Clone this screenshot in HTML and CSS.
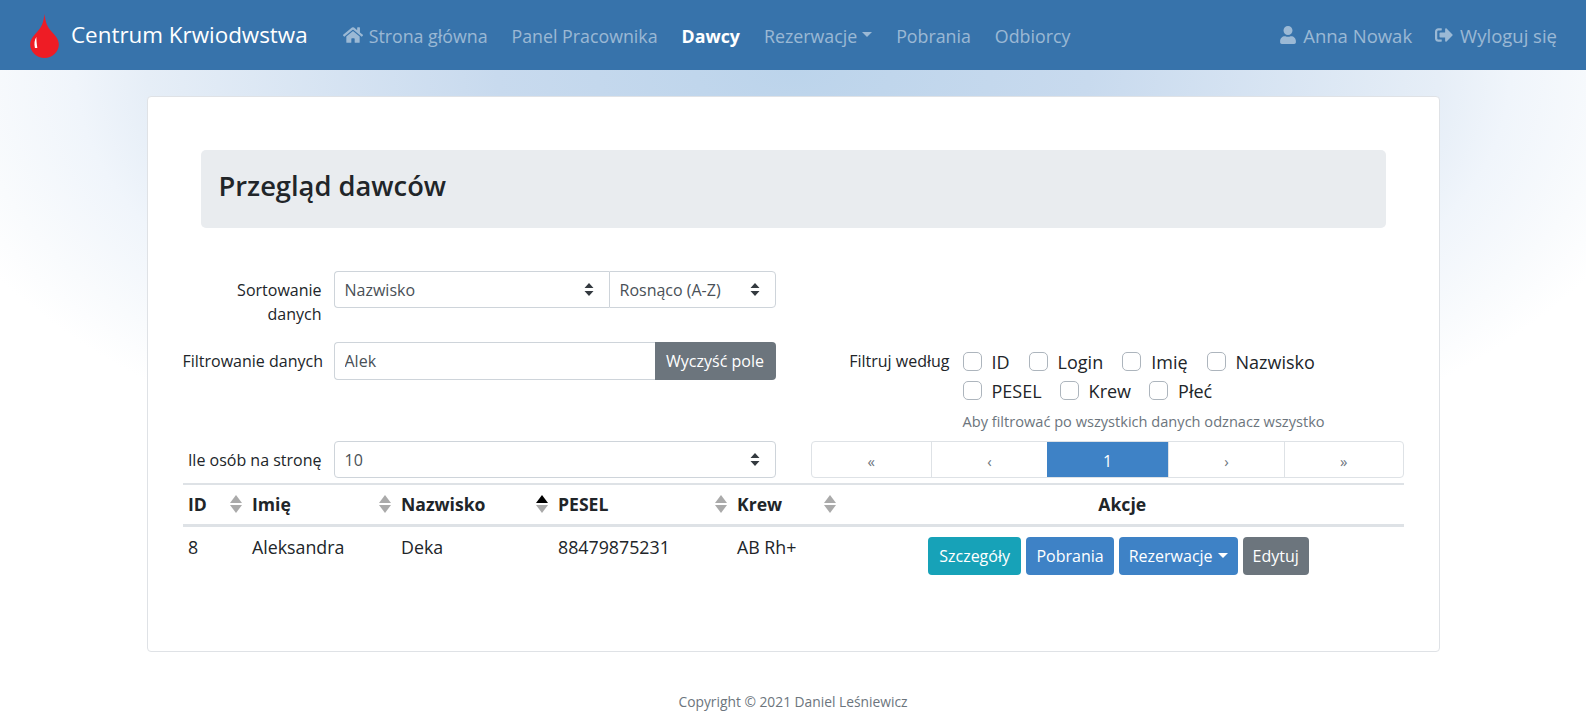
FILE: index.html
```html
<!DOCTYPE html>
<html lang="pl">
<head>
<meta charset="utf-8">
<title>Centrum Krwiodwstwa</title>
<link rel="stylesheet" href="styles.css">
</head>
<body>
<nav class="navbar">
  <a class="brand" href="#">
    <svg class="drop" viewBox="0 0 30 46" width="30" height="46"><path d="M15 0C16 9 18 14 23 19C28 24 30 28 30 32C30 40 23 46 15 46C7 46 0 40 0 32C0 28 2 24 7 19C12 14 14 9 15 0Z" fill="#ee1c25"/><path d="M6.500 24C4.500 27 4 31 5 35.500L7.500 35.500C6.800 31 6.500 27 6.500 24Z" fill="#fff"/></svg>
    <span>Centrum Krwiodwstwa</span>
  </a>
  <ul class="nav-list">
    <li><a href="#"><svg class="icon home" viewBox="0 0 576 512"><path d="M280.37 148.26L96 300.11V464a16 16 0 0 0 16 16l112.06-.29a16 16 0 0 0 15.92-16V368a16 16 0 0 1 16-16h64a16 16 0 0 1 16 16v95.64a16 16 0 0 0 16 16.05L464 480a16 16 0 0 0 16-16V300L295.67 148.26a12.19 12.19 0 0 0-15.3 0zM571.6 251.47L488 182.56V44.05a12 12 0 0 0-12-12h-56a12 12 0 0 0-12 12v72.61L318.47 43a48 48 0 0 0-61 0L4.34 251.47a12 12 0 0 0-1.6 16.9l25.5 31A12 12 0 0 0 45.15 301l235.22-193.74a12.19 12.19 0 0 1 15.3 0L530.9 301a12 12 0 0 0 16.9-1.6l25.5-31a12 12 0 0 0-1.7-16.93z"/></svg>Strona główna</a></li>
    <li><a href="#">Panel Pracownika</a></li>
    <li><a class="active" href="#">Dawcy</a></li>
    <li><a class="caret-link" href="#">Rezerwacje</a></li>
    <li><a href="#">Pobrania</a></li>
    <li><a href="#">Odbiorcy</a></li>
  </ul>
  <ul class="nav-list nav-right">
    <li><a href="#"><svg class="icon user" viewBox="0 0 448 512"><path d="M224 256c70.700 0 128-57.300 128-128S294.700 0 224 0 96 57.300 96 128s57.300 128 128 128zm89.600 32h-16.700c-22.200 10.200-46.900 16-72.900 16s-50.600-5.800-72.900-16h-16.700C60.200 288 0 348.200 0 422.400V464c0 26.500 21.500 48 48 48h352c26.500 0 48-21.500 48-48v-41.600c0-74.200-60.200-134.400-134.400-134.400z"/></svg>Anna Nowak</a></li>
    <li><a href="#"><svg class="icon out" viewBox="0 0 512 512"><path d="M497 273L329 441c-15 15-41 4.500-41-17v-96H152c-13.300 0-24-10.700-24-24v-96c0-13.300 10.700-24 24-24h136V88c0-21.400 25.900-32 41-17l168 168c9.300 9.400 9.300 24.600 0 34zM192 436v-40c0-6.600-5.400-12-12-12H96c-17.700 0-32-14.300-32-32V160c0-17.700 14.300-32 32-32h84c6.600 0 12-5.400 12-12V76c0-6.600-5.400-12-12-12H96c-53 0-96 43-96 96v192c0 53 43 96 96 96h84c6.600 0 12-5.400 12-12z"/></svg>Wyloguj się</a></li>
  </ul>
</nav>

<main class="card">
  <header class="jumbo"><h1>Przegląd dawców</h1></header>

  <section class="form-grid">
    <div class="field">
      <label class="field-label">Sortowanie<br>danych</label>
      <div class="group">
        <select class="select grow"><option>Nazwisko</option></select>
        <select class="select order"><option>Rosnąco (A-Z)</option></select>
      </div>
    </div>
    <div></div>

    <div class="field">
      <label class="field-label">Filtrowanie danych</label>
      <div class="group">
        <input class="input" type="text" value="Alek">
        <button class="btn btn-secondary btn-clear">Wyczyść pole</button>
      </div>
    </div>
    <div class="field">
      <label class="field-label">Filtruj według</label>
      <div class="filters">
        <div class="checks">
          <label class="check"><input type="checkbox">ID</label>
          <label class="check"><input type="checkbox">Login</label>
          <label class="check"><input type="checkbox">Imię</label>
          <label class="check"><input type="checkbox">Nazwisko</label>
        </div>
        <div class="checks checks-tight">
          <label class="check"><input type="checkbox">PESEL</label>
          <label class="check"><input type="checkbox">Krew</label>
          <label class="check"><input type="checkbox">Płeć</label>
        </div>
        <small class="hint">Aby filtrować po wszystkich danych odznacz wszystko</small>
      </div>
    </div>

    <div class="field">
      <label class="field-label">Ile osób na stronę</label>
      <div class="group"><select class="select grow"><option>10</option></select></div>
    </div>
    <div class="pagination">
      <a href="#">«</a><a href="#">‹</a><a class="current" href="#">1</a><a href="#">›</a><a href="#">»</a>
    </div>
  </section>

  <table class="table">
    <colgroup><col class="c1"><col class="c2"><col class="c3"><col class="c4"><col class="c5"><col></colgroup>
    <thead>
      <tr>
        <th><div class="th-in">ID<span class="sort"><i class="up"></i><i class="down"></i></span></div></th>
        <th><div class="th-in">Imię<span class="sort"><i class="up"></i><i class="down"></i></span></div></th>
        <th><div class="th-in">Nazwisko<span class="sort"><i class="up on"></i><i class="down"></i></span></div></th>
        <th><div class="th-in">PESEL<span class="sort"><i class="up"></i><i class="down"></i></span></div></th>
        <th><div class="th-in">Krew<span class="sort"><i class="up"></i><i class="down"></i></span></div></th>
        <th class="center">Akcje</th>
      </tr>
    </thead>
    <tbody>
      <tr>
        <td>8</td><td>Aleksandra</td><td>Deka</td><td>88479875231</td><td>AB Rh+</td>
        <td class="center">
          <div class="actions">
            <button class="btn btn-info">Szczegóły</button>
            <button class="btn btn-primary">Pobrania</button>
            <button class="btn btn-primary caret-link">Rezerwacje</button>
            <button class="btn btn-secondary">Edytuj</button>
          </div>
        </td>
      </tr>
    </tbody>
  </table>
</main>

<footer class="footer">Copyright © 2021 Daniel Leśniewicz</footer>
</body>
</html>
```
FILE: styles.css
```css
* { box-sizing: border-box; }
html, body { height: 100%; }
body {
  margin: 0;
  font-family: "Open Sans", "Noto Sans", sans-serif;
  font-size: 16px;
  line-height: 24px;
  color: #212529;
  background: #fff radial-gradient(ellipse 897px 449px at 50% 70px, #bcd4eb 0%, #c8daee 33%, #e6eef7 72%, #f0f5fb 80%, #f9fbfd 92%, #fff 100%) no-repeat;
}
a { text-decoration: none; }

.navbar {
  height: 70px;
  background: #3773ab;
  display: flex;
  align-items: center;
  padding: 0 29px 0 30px;
}
.brand { display: flex; align-items: center; color: #fff; font-size: 22.4px; margin-right: 35px; }
.drop { margin-right: 12px; width: 29px; height: 44px; margin-top: 1px; }
.nav-list { display: flex; list-style: none; margin: 1px 0 0; padding: 0; gap: 24px; align-items: center; font-size: 17.8px; }
.nav-right { margin-left: auto; gap: 22px; font-size: 18.5px; }
.nav-list a { color: rgba(255,255,255,.5); display: flex; align-items: center; }
.nav-list a.active { color: #fff; font-weight: 700; }
.caret-link::after {
  content: "";
  display: inline-block;
  margin-left: 5px;
  vertical-align: .2em;
  border-top: 5px solid currentColor;
  border-left: 5px solid transparent;
  border-right: 5px solid transparent;
}
.nav-list .caret-link::after { margin-bottom: 3px; }
.icon { fill: currentColor; height: 18px; margin-right: 6px; margin-top: -2px; }
.home { width: 20px; }
.user { width: 18px; }
.out { width: 20px; }

.card {
  width: 1293px;
  height: 556px;
  margin: 26px auto 0;
  padding: 53px 37px 0 35px;
  background: #fff;
  border: 1px solid #dfe2e6;
  border-radius: 4px;
}
.jumbo {
  margin: 0 16px 43px 18px;
  height: 78px;
  padding: 0 18px 6px;
  display: flex;
  align-items: center;
  background: #e9ecef;
  border-radius: 5px;
}
.jumbo h1 { margin: 0; font-size: 27.3px; font-weight: 600; line-height: 32px; }

.form-grid {
  display: grid;
  grid-template-columns: 593px 593px;
  column-gap: 35px;
  row-gap: 16px;
  margin-bottom: 5px;
}
.field { display: grid; grid-template-columns: 139px 442px; column-gap: 12px; align-items: start; }
.field-label { text-align: right; padding-top: 7px; white-space: nowrap; }
.group { display: flex; }
.select, .input {
  font: inherit;
  color: #495057;
  background-color: #fff;
  border: 1px solid #ced4da;
  padding: 0 10px;
  outline: 0;
}
.input { height: 38px; }
.select {
  height: 37px;
  appearance: none;
  -webkit-appearance: none;
  border-radius: 4px;
  background-image: url("data:image/svg+xml,%3csvg xmlns='http://www.w3.org/2000/svg' width='10' height='13' viewBox='0 0 10 13'%3e%3cpath fill='%23343a40' d='M5 0l4.500 5h-9zM5 13L.5 8h9z'/%3e%3c/svg%3e");
  background-repeat: no-repeat;
  background-position: right 15px center;
}
.grow { flex: 1; min-width: 0; }
.group .grow:not(:only-child) { border-radius: 4px 0 0 4px; border-right: 0; }
.order { width: 167px; border-radius: 0 4px 4px 0; }
.input { flex: 1; min-width: 0; border-radius: 4px 0 0 4px; border-right: 0; }

.btn {
  font: inherit;
  color: #fff;
  height: 38px;
  border: 0;
  border-radius: 4px;
  padding: 0 10px;
  white-space: nowrap;
}
.btn-secondary { background: #6c757d; }
.btn-info { background: #17a2b8; padding: 0 11.5px; }
.btn-primary { background: #3e82c6; }
.btn-clear { border-radius: 0 4px 4px 0; width: 121px; padding: 0; }

.filters { display: flex; flex-direction: column; margin-left: 1px; margin-bottom: -8px; }
.checks { display: flex; gap: 19px; height: 29px; align-items: center; font-size: 18px; }
.checks-tight { gap: 18px; }
.checks:first-child { margin-top: 5px; }
.check { display: flex; align-items: center; gap: 10px; color: #212529; }
.check input {
  appearance: none;
  -webkit-appearance: none;
  margin: 0;
  width: 19px;
  height: 19px;
  background: #fff;
  border: 1px solid #adb5bd;
  border-radius: 5px;
}
.hint { font-size: 14.6px; color: #6c757d; margin-top: 4px; line-height: 24px; white-space: nowrap; }

.pagination {
  display: grid;
  grid-template-columns: 120fr 116fr 122fr 116fr 119fr;
  height: 37px;
  border: 1px solid #dee2e6;
  border-radius: 4px;
  overflow: hidden;
}
.pagination a {
  display: flex;
  align-items: center;
  justify-content: center;
  color: #6c757d;
  font-size: 15px;
  padding-top: 2px;
  border-left: 1px solid #dee2e6;
}
.pagination a:first-child { border-left: 0; }
.pagination a.current { background: #3e82c6; color: #fff; border-left: 0; font-size: 16px; }

.table { width: 1221px; table-layout: fixed; border-collapse: collapse; font-size: 17.8px; }
.c1 { width: 64px; }
.c2 { width: 149px; }
.c3 { width: 157px; }
.c4 { width: 179px; }
.c5 { width: 109px; }
.table th {
  height: 41px;
  padding: 0 5px 0 5.5px;
  text-align: left;
  font-size: 17.6px;
  font-weight: 700;
  border-top: 2px solid #dee2e6;
  border-bottom: 3px solid #dee2e6;
}
.table th.center, .table td.center { text-align: center; }
.th-in { display: flex; justify-content: space-between; align-items: center; }
.sort { display: flex; flex-direction: column; gap: 2px; }
.sort i { display: block; width: 0; height: 0; border-left: 6px solid transparent; border-right: 6px solid transparent; }
.sort .up { border-bottom: 8px solid #aaa; }
.sort .up.on { border-bottom-color: #000; }
.sort .down { border-top: 8px solid #aaa; }
.table td { padding: 8px 5px 6px 5.5px; vertical-align: top; }
.table td.center { padding-top: 10px; font-size: 16px; }
.actions { display: flex; justify-content: center; gap: 5px; padding-right: 8px; }

.footer { text-align: center; color: #6c757d; font-size: 13.8px; margin-top: 38px; }
```
